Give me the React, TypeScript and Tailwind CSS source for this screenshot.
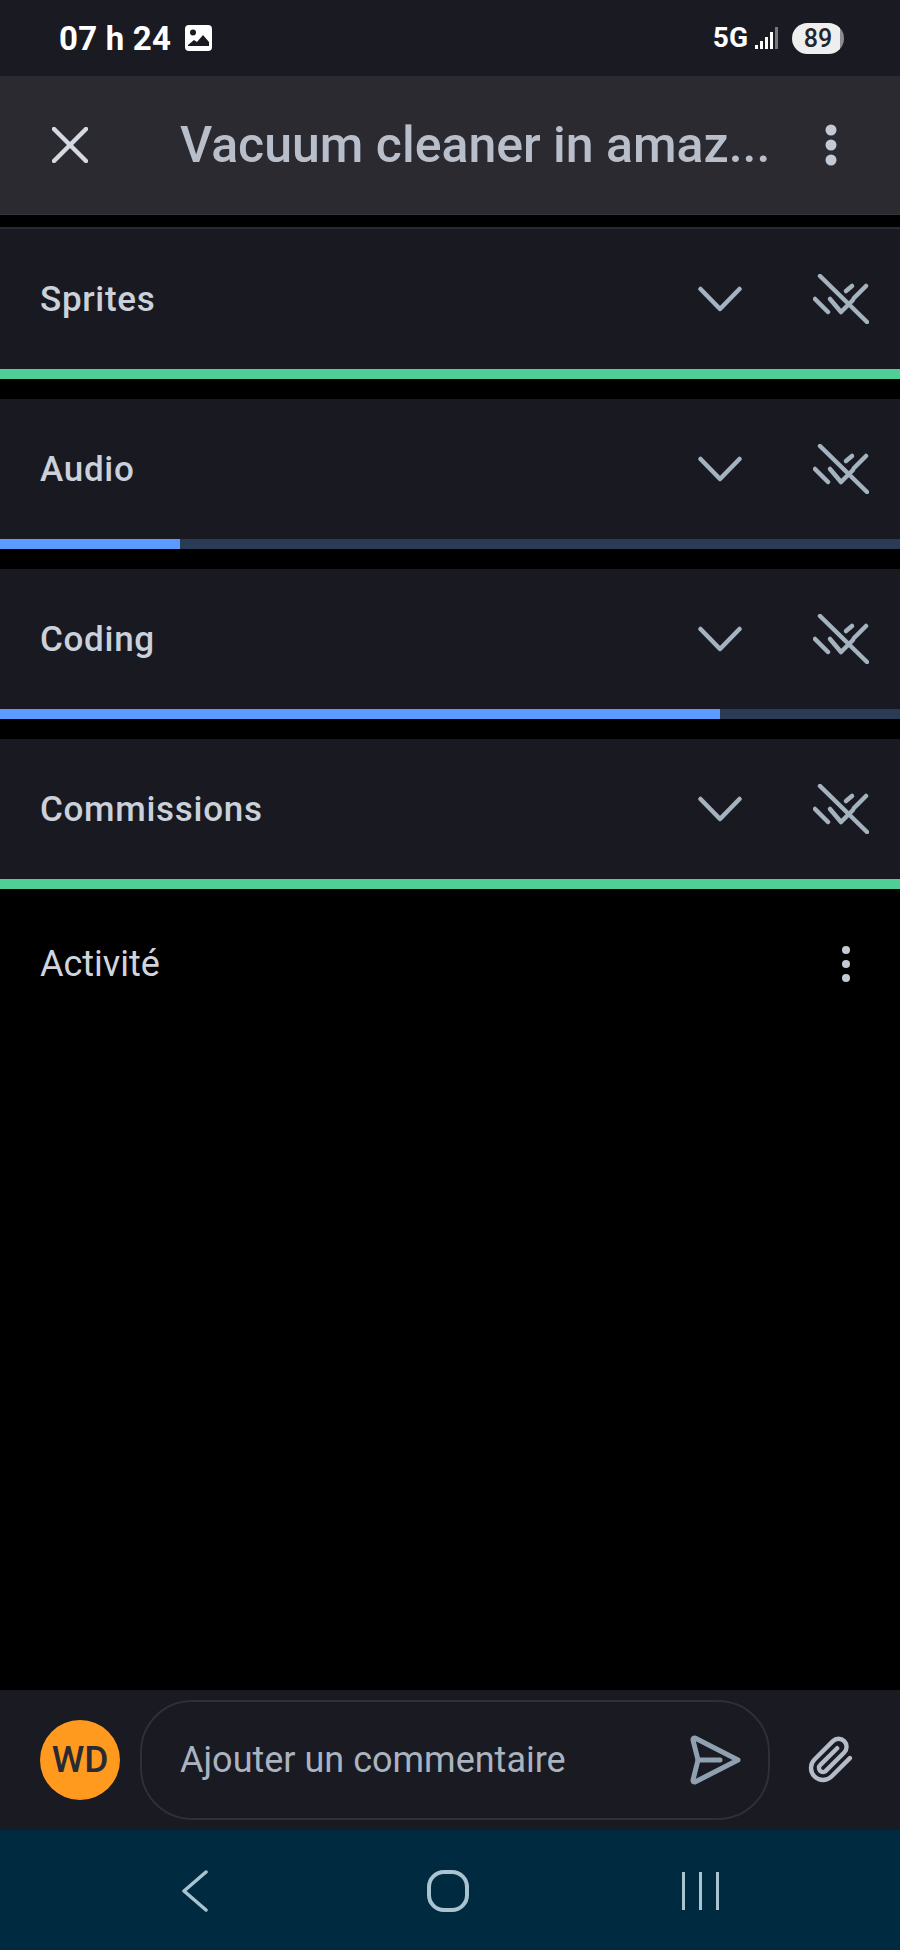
const sections = [
    { name: 'Sprites', progress: 100, color: 'bg-[#4fce95]', first: true },
    { name: 'Audio', progress: 20, color: 'bg-[#5b9bff]', first: false },
    { name: 'Coding', progress: 80, color: 'bg-[#5b9bff]', first: false },
    { name: 'Commissions', progress: 100, color: 'bg-[#4fce95]', first: false },
];

function Kebab({ big }: { big?: boolean }) {
    return (
        <svg width="14" height={big ? 42 : 38} viewBox={big ? '0 0 14 42' : '0 0 14 38'} fill="#c3cad6">
            {big ? (
                <>
                    <circle cx="7" cy="6" r="5.5" />
                    <circle cx="7" cy="21" r="5.5" />
                    <circle cx="7" cy="36" r="5.5" />
                </>
            ) : (
                <>
                    <circle cx="7" cy="5" r="4" />
                    <circle cx="7" cy="19" r="4" />
                    <circle cx="7" cy="33" r="4" />
                </>
            )}
        </svg>
    );
}

function DoneIcon() {
    return (
        <svg width="56" height="50" viewBox="0 0 56 50" fill="none" stroke="#a4b3bf" strokeWidth="4.5" strokeLinecap="round" strokeLinejoin="round">
            <path d="M7 2 L54 48" />
            <path d="M2 25 L15 38" />
            <path d="M17 25 L28 38 L40 26" />
            <path d="M33 17 L39 12" />
            <path d="M41 24 L53 12" />
        </svg>
    );
}

export default function App() {
    return (
        <div className="flex h-[1950px] w-[900px] flex-col overflow-hidden bg-black font-['Roboto',sans-serif]">
            {/* Status bar */}
            <div className="flex h-[76px] items-center bg-[#1a1a22] pl-[59px] pr-[56px]">
                <span className="text-[33px] font-bold leading-none tracking-[0.2px] text-white">07 h 24</span>
                <svg className="ml-[14px]" width="27" height="26" viewBox="0 0 27 26">
                    <rect width="27" height="26" rx="4" fill="#fff" />
                    <circle cx="8" cy="7.5" r="3" fill="#1a1a22" />
                    <path d="M3 20 L9 15 L12 17 L18 10 L24 17 L24 21 L3 21 Z" fill="#1a1a22" />
                </svg>
                <span className="ml-auto text-[28px] font-bold leading-none text-white">5G</span>
                <svg className="ml-[7px]" width="23" height="24" viewBox="0 0 23 24" fill="#fff">
                    <rect x="0" y="19" width="3" height="4" />
                    <rect x="5" y="15" width="3" height="8" />
                    <rect x="10" y="11" width="3" height="12" />
                    <rect x="15" y="6" width="3" height="17" />
                    <rect x="20" y="1" width="3" height="22" fill="#77777f" />
                </svg>
                <div className="ml-[14px] flex h-[31px] w-[52px] items-center justify-center rounded-full bg-[linear-gradient(90deg,#eeeeee_92%,#8b8b90_92%)] text-[25px] font-medium leading-none text-[#24242c]">
                    89
                </div>
            </div>

            {/* Header */}
            <div className="flex h-[139px] items-center border-b border-[#34343b] bg-[#2a2a30] pl-[52px] pr-[62px]">
                <svg width="36" height="36" viewBox="0 0 36 36" fill="none" stroke="#d5dae2" strokeWidth="4.5" strokeLinecap="round">
                    <path d="M2 2 L34 34" />
                    <path d="M34 2 L2 34" />
                </svg>
                <span className="ml-[92px] text-[50px] font-medium leading-none whitespace-nowrap text-[#b9becb]">Vacuum cleaner in amaz...</span>
                <div className="ml-auto">
                    <Kebab big />
                </div>
            </div>

            {/* Sections */}
            <div className="mt-3 flex flex-col gap-5">
                {sections.map((section) => (
                    <div
                        key={section.name}
                        className={`flex flex-col bg-[#191a21] ${section.first ? 'h-[152px] border-t-2 border-[#2a2b31]' : 'h-[150px]'}`}
                    >
                        <div className="flex flex-1 items-center pl-[40px] pr-[31px]">
                            <span className="text-[35px] font-medium leading-none tracking-[0.7px] text-[#cbd1db]">{section.name}</span>
                            <svg className="ml-auto" width="44" height="26" viewBox="0 0 44 26" fill="none" stroke="#a4b3bf" strokeWidth="4.5" strokeLinecap="round" strokeLinejoin="round">
                                <path d="M2.5 3 L22 23 L41.5 3" />
                            </svg>
                            <div className="ml-[71px]">
                                <DoneIcon />
                            </div>
                        </div>
                        <div className="h-[10px] bg-[#2b3a55]">
                            <div className={`h-full ${section.color}`} style={{ width: `${section.progress}%` }} />
                        </div>
                    </div>
                ))}
            </div>

            {/* Activity */}
            <div className="flex flex-1 items-start pl-[40px] pr-[47px] pt-[56px]">
                <span className="text-[36px] leading-[38px] text-[#d0d5dd]">Activité</span>
                <div className="ml-auto">
                    <Kebab />
                </div>
            </div>

            {/* Comment bar */}
            <div className="flex h-[140px] items-center bg-[#1a1a22] pl-[40px]">
                <div className="flex h-[80px] w-[80px] items-center justify-center rounded-full bg-[#ff9a1f] text-[37px] font-medium text-[#2a2a32]">WD</div>
                <div className="ml-[20px] flex h-[120px] w-[630px] items-center rounded-[52px] border-2 border-[#2e2f37] pl-[38px] pr-[26px]">
                    <span className="text-[36px] leading-none text-[#a9b4c0]">Ajouter un commentaire</span>
                    <svg className="ml-auto" width="52" height="52" viewBox="0 0 52 52" fill="none" stroke="#8fa1b0" strokeWidth="5" strokeLinecap="round" strokeLinejoin="round">
                        <path d="M5 4 L48 26 L5 48 C3 48 3 47 3 46 L8 26 L3 6 C3 5 3 4 5 4 Z" />
                        <path d="M8 26 L30 26" />
                    </svg>
                </div>
                <svg className="ml-[37px]" width="48" height="50" viewBox="0 0 24 24" fill="none" stroke="#b4bcc8" strokeWidth="2.2" strokeLinecap="round" strokeLinejoin="round">
                    <path d="M21.44 11.05l-9.19 9.19a6 6 0 0 1-8.49-8.49l9.19-9.19a4 4 0 0 1 5.66 5.66l-9.2 9.19a2 2 0 0 1-2.83-2.83l8.49-8.48" />
                </svg>
            </div>

            {/* Android nav */}
            <div className="flex h-[120px] items-center bg-[#002a40] pl-[181px] pt-[2px]">
                <svg width="28" height="42" viewBox="0 0 28 42" fill="none" stroke="#a9c4d0" strokeWidth="3.5" strokeLinecap="round" strokeLinejoin="round">
                    <path d="M25 2 L3 21 L25 40" />
                </svg>
                <svg className="ml-[218px]" width="42" height="42" viewBox="0 0 42 42" fill="none" stroke="#a9c4d0" strokeWidth="4">
                    <rect x="2" y="2" width="38" height="38" rx="15" />
                </svg>
                <div className="ml-[213px] flex h-[38px] gap-[14px]">
                    <div className="w-[3px] bg-[#a9c4d0]" />
                    <div className="w-[3px] bg-[#a9c4d0]" />
                    <div className="w-[3px] bg-[#a9c4d0]" />
                </div>
            </div>
        </div>
    );
}
